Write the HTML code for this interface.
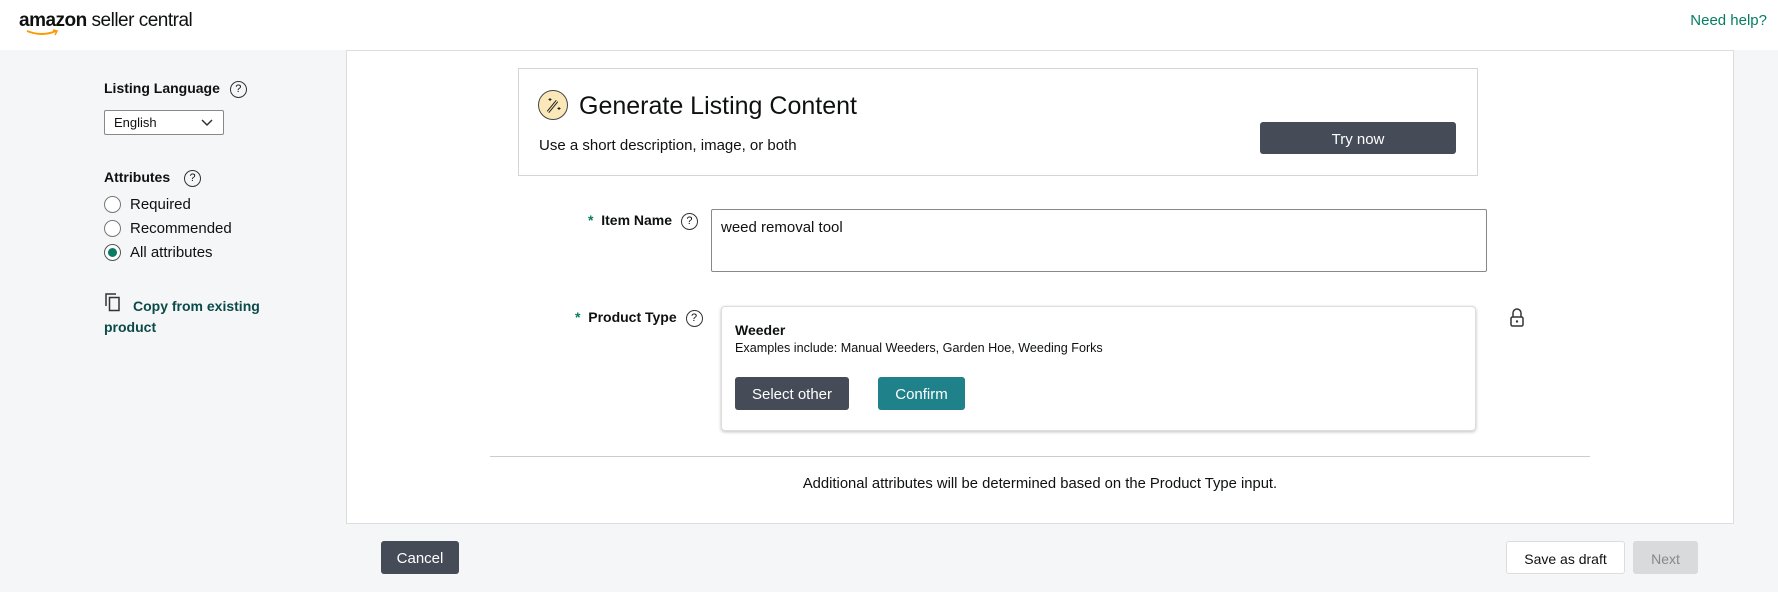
<!DOCTYPE html>
<html><head><style>
*{box-sizing:border-box;margin:0;padding:0}
body{width:1778px;height:592px;background:#f4f6f7;font-family:"Liberation Sans",sans-serif;color:#0f1111;position:relative;overflow:hidden;font-size:14px}
.a{position:absolute}
.hdr{left:0;top:0;width:1778px;height:50px;background:#fff}
.q{display:inline-block;width:17px;height:17px;border:1.5px solid #333;border-radius:50%;font-size:11px;text-align:center;line-height:14px;font-weight:normal;vertical-align:1px}
.radio{width:17px;height:17px;border:1.5px solid #777;border-radius:50%;background:#fff}
.btn{display:flex;align-items:center;justify-content:center;border-radius:3px;font-size:15px;padding-top:2px}
</style></head><body>
<div class="a hdr"></div>
<div class="a" style="left:19px;top:10px;font-size:19px;letter-spacing:-0.5px"><b style="font-weight:bold">amazon</b> seller central</div>
<svg class="a" style="left:26px;top:29px" width="34" height="8"><path d="M1 2 Q16 8 30 2" stroke="#f90" stroke-width="2" fill="none"/><path d="M27 1 L31 2 L29 6" stroke="#f90" stroke-width="1.5" fill="none"/></svg>
<div class="a" style="right:11px;top:12px;color:#067d62;font-size:15px">Need help?</div>

<div class="a" style="left:104px;top:80px;font-weight:bold;font-size:14px">Listing Language <span class="q" style="margin-left:6px">?</span></div>
<div class="a" style="left:104px;top:110px;width:120px;height:25px;border:1px solid #888;background:#fff;border-radius:2px;font-size:13px;padding:4px 9px">English<svg class="a" style="right:10px;top:8px" width="12" height="8"><path d="M1 1 L6 6 L11 1" stroke="#333" stroke-width="1.5" fill="none"/></svg></div>
<div class="a" style="left:104px;top:169px;font-weight:bold;font-size:14px">Attributes <span class="q" style="margin-left:10px">?</span></div>
<div class="a radio" style="left:104px;top:196px"></div><div class="a" style="left:130px;top:196px;font-size:15px">Required</div>
<div class="a radio" style="left:104px;top:220px"></div><div class="a" style="left:130px;top:220px;font-size:15px">Recommended</div>
<div class="a radio" style="left:104px;top:244px;border-color:#555"><div style="margin:2.5px;width:9px;height:9px;border-radius:50%;background:#067d62"></div></div><div class="a" style="left:130px;top:244px;font-size:15px">All attributes</div>
<svg class="a" style="left:105px;top:293px" width="18" height="20"><path d="M1 13 V1 H11" stroke="#333" stroke-width="1.5" fill="none"/><rect x="4.5" y="4.5" width="9.5" height="13" stroke="#333" stroke-width="1.5" fill="none"/></svg>
<div class="a" style="left:104px;top:296px;width:170px;color:#0c4a4a;font-weight:bold;font-size:14px;line-height:21px;text-indent:29px">Copy from existing product</div>

<div class="a" style="left:346px;top:50px;width:1388px;height:474px;background:#fff;border:1px solid #ddd"></div>
<div class="a" style="left:518px;top:68px;width:960px;height:108px;border:1px solid #d5d5d5;background:#fff"></div>
<div class="a" style="left:538px;top:90px;width:30px;height:30px;border-radius:50%;background:#fbe8b8;border:1.5px solid #444"></div>
<svg class="a" style="left:538px;top:90px" width="30" height="30"><path d="M10 22 L19 11" stroke="#222" stroke-width="3"/><path d="M10 22 L19 11" stroke="#fbe8b8" stroke-width="1"/><path d="M12 8 v3 M10.5 9.5 h3 M21 17 v3 M19.5 18.5 h3" stroke="#222" stroke-width="1"/></svg>
<div class="a" style="left:579px;top:92px;font-size:25px">Generate Listing Content</div>
<div class="a" style="left:539px;top:137px;font-size:15px">Use a short description, image, or both</div>
<div class="a btn" style="left:1260px;top:122px;width:196px;height:32px;background:#454b57;color:#fff">Try now</div>

<div class="a" style="left:588px;top:212px;font-weight:bold;font-size:14px"><span style="color:#067d62">*</span>&nbsp; Item Name <span class="q" style="margin-left:5px">?</span></div>
<div class="a" style="left:711px;top:209px;width:776px;height:63px;border:1px solid #888;border-radius:2px;padding:9px 9px;font-size:15px">weed removal tool</div>
<div class="a" style="left:575px;top:309px;font-weight:bold;font-size:14px"><span style="color:#067d62">*</span>&nbsp; Product Type <span class="q" style="margin-left:5px">?</span></div>
<div class="a" style="left:721px;top:306px;width:755px;height:125px;border:1px solid #ddd;border-radius:4px;box-shadow:0 1px 3px rgba(0,0,0,.25);background:#fff"></div>
<div class="a" style="left:735px;top:322px;font-weight:bold;font-size:14px">Weeder</div>
<div class="a" style="left:735px;top:341px;font-size:12.6px">Examples include: Manual Weeders, Garden Hoe, Weeding Forks</div>
<div class="a btn" style="left:735px;top:377px;width:114px;height:33px;background:#454b57;color:#fff">Select other</div>
<div class="a btn" style="left:878px;top:377px;width:87px;height:33px;background:#1f8189;color:#fff">Confirm</div>
<svg class="a" style="left:1509px;top:308px" width="16" height="20"><path d="M4 9 V5 a4 4 0 0 1 8 0 V9" stroke="#333" stroke-width="1.5" fill="none"/><rect x="2" y="9" width="12" height="9" rx="1.5" stroke="#333" stroke-width="1.5" fill="none"/><circle cx="8" cy="13.5" r="1.2" fill="#333"/></svg>
<div class="a" style="left:490px;top:456px;width:1100px;height:1px;background:#ccc"></div>
<div class="a" style="left:490px;top:476px;width:1100px;text-align:center;font-size:14.8px">Additional attributes will be determined based on the Product Type input.</div>

<div class="a btn" style="left:381px;top:541px;width:78px;height:33px;background:#454b57;color:#fff">Cancel</div>
<div class="a btn" style="left:1506px;top:541px;width:119px;height:33px;background:#fff;border:1px solid #ddd;font-size:14px">Save as draft</div>
<div class="a btn" style="left:1633px;top:541px;width:65px;height:33px;background:#d8dadb;color:#888;font-size:14px">Next</div>
</body></html>
